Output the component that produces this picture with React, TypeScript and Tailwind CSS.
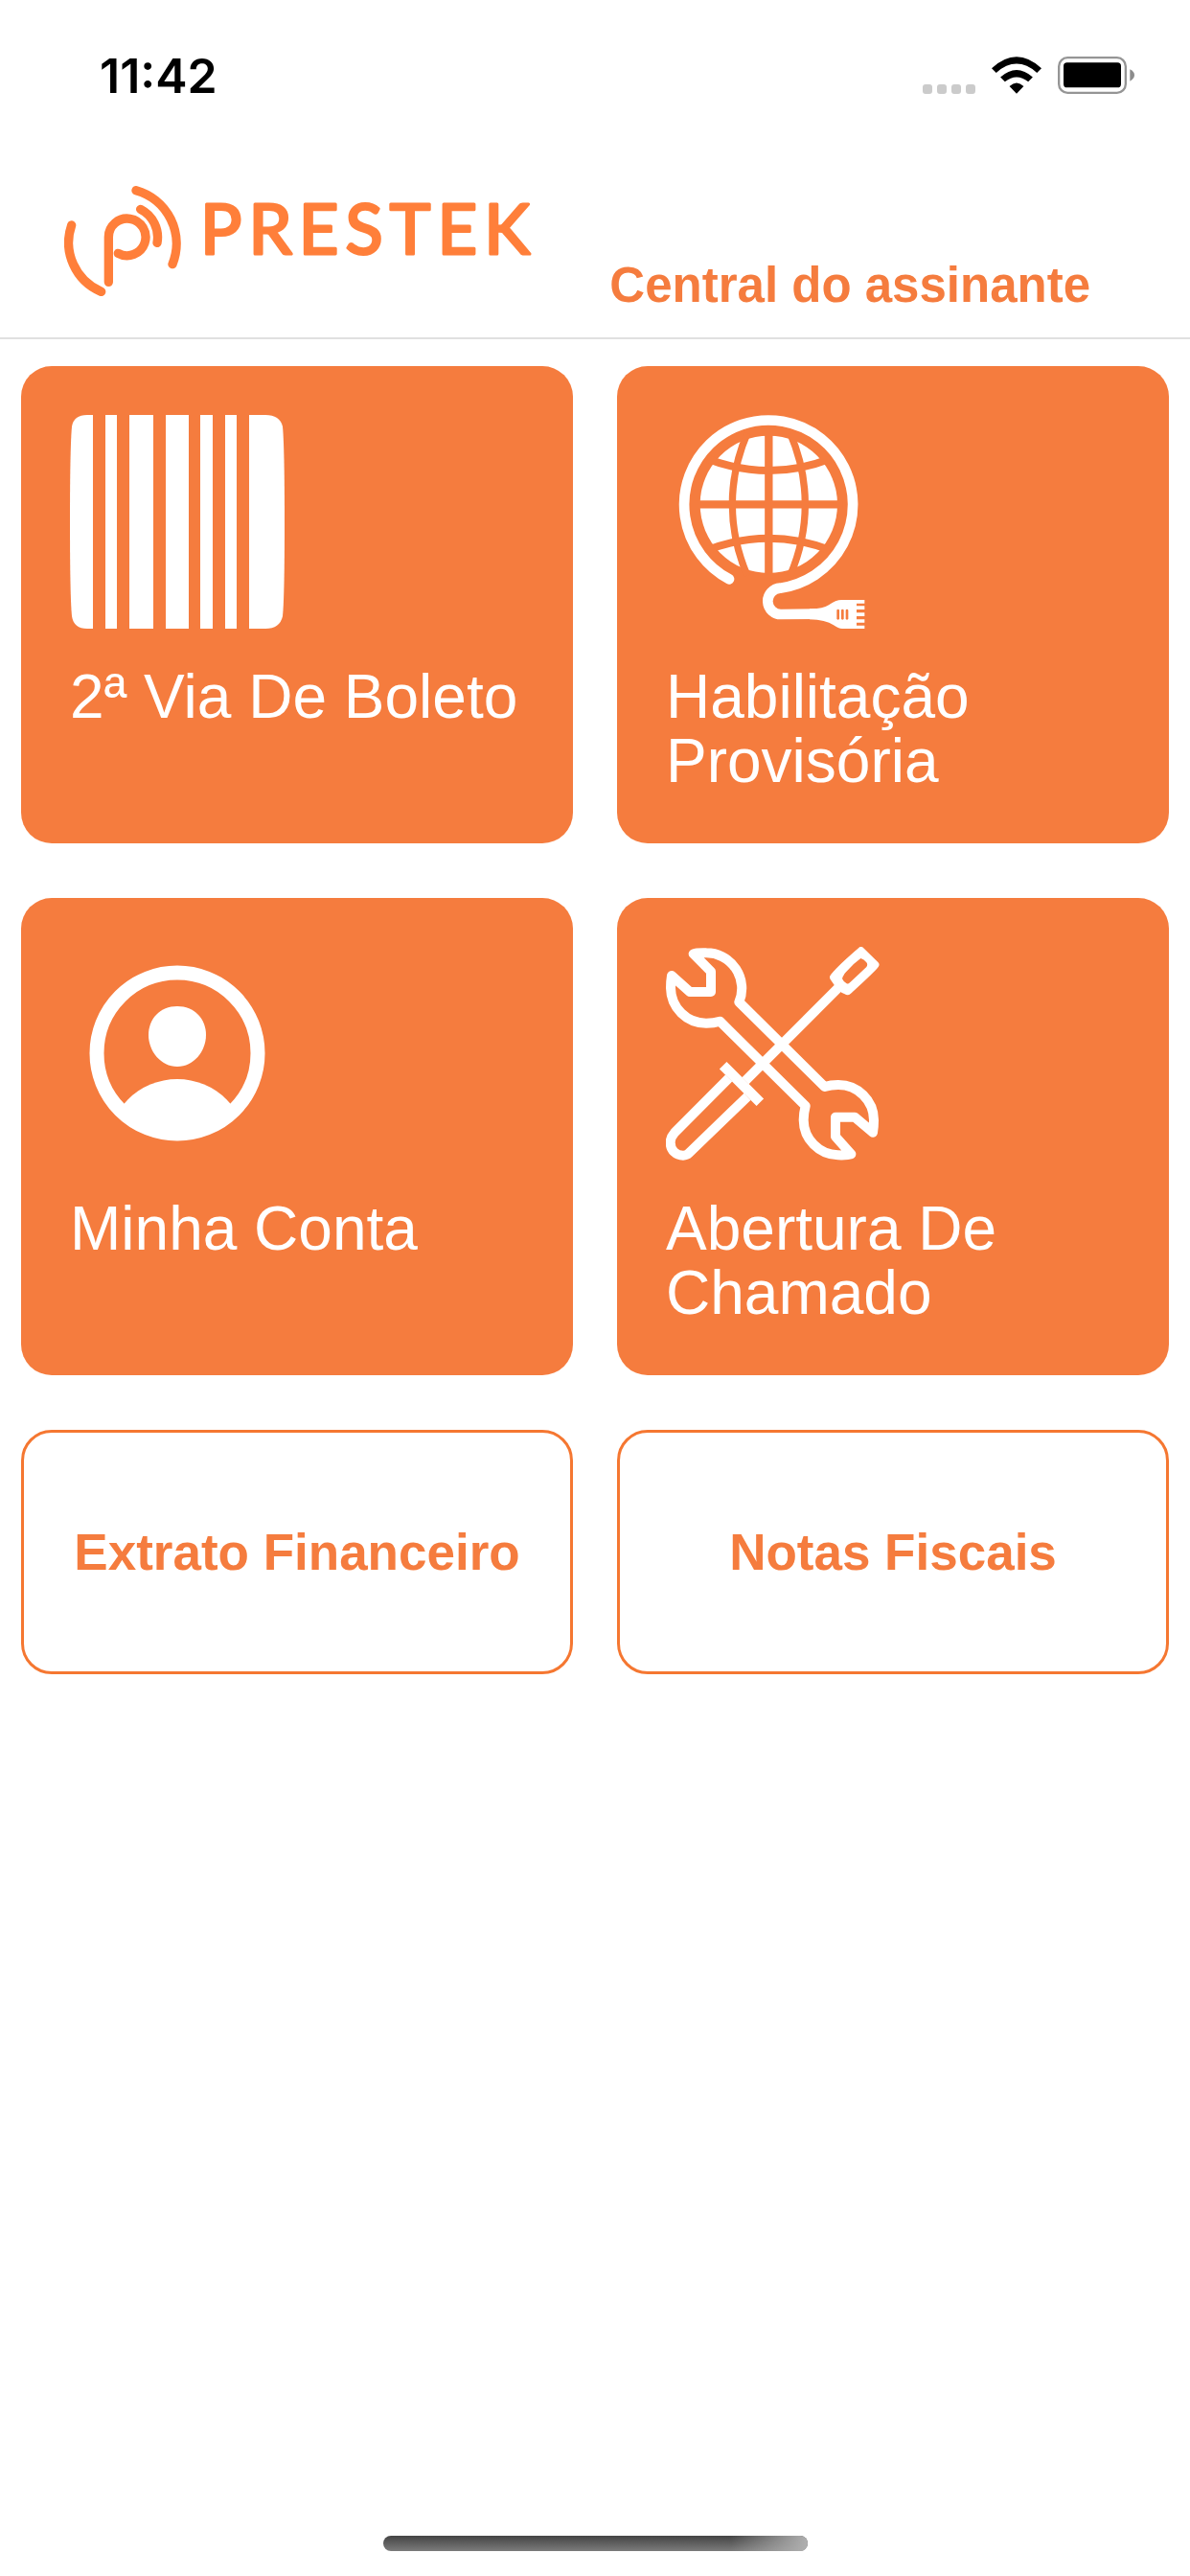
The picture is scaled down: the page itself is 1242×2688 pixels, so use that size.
import type { ReactNode } from "react";

function StatusBar() {
  return (
    <div className="flex items-end justify-between pt-[50px] pr-[58px] pl-[104px]">
      <time className="font-[Inter,sans-serif] text-[50px] leading-[58px] font-semibold text-black">11:42</time>
      <div className="flex items-end gap-[17px] pb-[10px]">
        <div className="flex gap-[5px]" aria-label="Sem sinal">
          {[0, 1, 2, 3].map((n) => (
            <span key={n} className="size-[10px] rounded-[3px] bg-[#cbcbcb]" />
          ))}
        </div>
        <svg className="w-[52px]" viewBox="284 55 154 116" aria-label="Wi-Fi">
          <path d="M284 91 Q361 20 438 91 L424 105 Q361 50 298 105 Z" />
          <path d="M311 119 Q361 74 411 119 L397 133 Q361 104 325 133 Z" />
          <path d="M339 147 Q361 126 383 147 L361 170 Z" />
        </svg>
        <svg className="w-[80px]" viewBox="492 57 240 117" aria-label="Bateria cheia">
          <rect x="495.500" y="60.500" width="209" height="110" rx="27" fill="none" stroke="#959595" strokeWidth="7" />
          <rect x="510" y="76" width="180" height="78" rx="11" />
          <path d="M718 97 Q732 104 732 115 Q732 127 718 134 Z" fill="#8c8c8c" />
        </svg>
      </div>
    </div>
  );
}

function Logo() {
  return (
    <div className="flex items-start text-[#ff7f3a]">
      <svg className="w-[122px]" viewBox="51 42 366 346" fill="none" stroke="currentColor" strokeWidth="28" strokeLinecap="round" aria-hidden="true">
        <path d="M74 165 A167 167 0 0 0 167 373" />
        <path d="M276 56 A173 173 0 0 1 390 287" />
        <path d="M190 343 V203 A58 58 0 1 1 220 253" />
        <path d="M290 115 A98 98 0 0 1 342 220" />
      </svg>
      <svg className="w-[370px]" viewBox="0 0 370 115" aria-label="PRESTEK">
        <text
          x="20"
          y="71"
          fill="currentColor"
          stroke="currentColor"
          strokeWidth="3"
          strokeLinejoin="round"
          className="font-[Lato,sans-serif] text-[72px] font-normal tracking-widest"
        >
          PRESTEK
        </text>
      </svg>
    </div>
  );
}

function BarcodeIcon() {
  return (
    <svg className="size-[224px]" viewBox="0 0 224 224" fill="currentColor" aria-hidden="true">
      <path d="M24 0 H18 Q4 0 2 12 Q0 34 0 112 Q0 190 2 210 Q4 223 18 223 H24 Z" />
      <rect x="37" width="12" height="223" />
      <rect x="62" width="25" height="223" />
      <rect x="100" width="24" height="223" />
      <rect x="136" width="13" height="223" />
      <rect x="162" width="12" height="223" />
      <path d="M187 0 H204 Q219 0 222 12 Q224 34 224 112 Q224 190 222 210 Q219 223 204 223 H187 Z" />
    </svg>
  );
}

function GlobeCableIcon() {
  return (
    <svg className="size-[224px]" viewBox="30 39 672 672" fill="currentColor" aria-hidden="true">
      <circle cx="352" cy="319" r="215" />
      <g fill="none" stroke="#f57c3e" strokeWidth="24">
        <path d="M352 90 V550 M120 319 H584" strokeWidth="25" />
        <path d="M285 96 Q238 205 238 319 Q238 433 285 542" strokeWidth="22" />
        <path d="M419 96 Q466 205 466 319 Q466 433 419 542" strokeWidth="22" />
        <path d="M160 176 Q255 213 352 213 Q449 213 544 176" />
        <path d="M160 462 Q255 425 352 425 Q449 425 544 462" />
      </g>
      <path
        d="M228 553 A264 264 0 1 1 388 581 A41 41 0 0 0 392 663 L500 662"
        fill="none"
        stroke="currentColor"
        strokeWidth="32"
        strokeLinecap="round"
      />
      <path d="M480 646 Q520 647 540 634 Q562 618 580 618 H652 V629 H627 V637 H652 V648 H627 V658 H652 V669 H627 V679 H652 V689 H627 V698 H652 V708 H582 Q570 708 555 697 Q530 680 480 679 Z" />
      <g fill="#f57c3e">
        <rect x="565" y="647" width="8" height="33" rx="4" />
        <rect x="579" y="647" width="8" height="33" rx="4" />
        <rect x="593" y="647" width="8" height="33" rx="4" />
      </g>
    </svg>
  );
}

function AccountIcon() {
  return (
    <svg className="size-[224px]" viewBox="0 0 224 224" fill="currentColor" aria-hidden="true">
      <clipPath id="account-disc">
        <circle cx="112" cy="111" r="84" />
      </clipPath>
      <circle cx="112" cy="111" r="84" fill="none" stroke="currentColor" strokeWidth="15" />
      <path d="M112 62 C130 62 142 75 142 92 C142 109 129 125 112 125 C95 125 82 109 82 92 C82 75 94 62 112 62 Z" />
      <circle cx="112" cy="211" r="73" clipPath="url(#account-disc)" />
    </svg>
  );
}

function ToolsIcon() {
  return (
    <svg className="size-[224px]" viewBox="28 38 672 672" fill="none" stroke="currentColor" strokeWidth="30" aria-hidden="true">
      <path
        strokeLinejoin="round"
        d="M257 211 A111 111 0 0 0 155 57 Q125 56 114 60 L169 115 V179 H103 L46 128 Q43 145 43 167 A111 111 0 0 0 155 277 Q178 277 197 271 L465 536 Q459 560 459 580 A111 111 0 0 0 567 690 Q597 691 608 687 L559 632 V571 H619 L676 619 Q679 602 679 580 A111 111 0 0 0 567 470 Q544 470 525 476 Z"
      />
      <path d="M277 457 L570 164" />
      <path d="M207 409 L323 525" strokeWidth="32" />
      <path d="M225 449 L55 620 Q42 635 42 650 C42 675 60 691 82 691 Q93 691 100 684 L283 507" />
      <path
        fill="currentColor"
        stroke="none"
        fillRule="evenodd"
        d="M632 41 Q639 33 646 41 L692 86 Q699 93 693 101 Q682 116 607 184 Q598 192 588 186 L578 181 L556 159 L543 140 Q538 132 545 124 Q570 94 632 41 Z M638 74 Q615 90 592 117 Q582 128 580 138 Q583 146 593 152 Q598 156 604 150 L656 101 Q661 93 656 87 Q648 76 638 74 Z"
      />
    </svg>
  );
}

function Tile({ icon, label }: { icon: ReactNode; label: string }) {
  return (
    <button
      type="button"
      className="flex min-h-[498px] flex-col items-start gap-[37px] rounded-[32px] bg-[#f57c3e] p-[51px] pr-[40px] pb-[48px] text-left text-[64px] leading-[67px] text-white"
    >
      {icon}
      <span>{label}</span>
    </button>
  );
}

function OutlineButton({ label }: { label: string }) {
  return (
    <button
      type="button"
      className="min-h-[255px] rounded-[32px] border-3 border-[#f57731] bg-white text-[53px] leading-[60px] font-bold text-[#f57c3e]"
    >
      {label}
    </button>
  );
}

export default function App() {
  return (
    <div className="flex min-h-screen flex-col bg-white font-['Liberation_Sans',Arial,sans-serif]">
      <StatusBar />
      <header className="flex items-start justify-between border-b-2 border-[#e0e0e0] pt-[86px] pr-[104px] pb-[24px] pl-[67px]">
        <Logo />
        <h1 className="pt-[74px] text-[51px] leading-[60px] font-bold text-[#f57c3e]">Central do assinante</h1>
      </header>
      <main className="grid grid-cols-2 gap-x-[46px] gap-y-[57px] px-[22px] pt-[28px]">
        <Tile icon={<BarcodeIcon />} label="2ª Via De Boleto" />
        <Tile icon={<GlobeCableIcon />} label="Habilitação Provisória" />
        <Tile icon={<AccountIcon />} label="Minha Conta" />
        <Tile icon={<ToolsIcon />} label="Abertura De Chamado" />
        <OutlineButton label="Extrato Financeiro" />
        <OutlineButton label="Notas Fiscais" />
      </main>
      <div className="mt-auto flex justify-center pb-[26px]">
        <div className="h-[16px] w-[443px] overflow-hidden rounded-full bg-linear-to-b from-[#444444] to-[#7c7c7c]">
          <div className="ml-auto h-full w-[80px] bg-linear-to-r from-transparent to-[#b0b0b0]" />
        </div>
      </div>
    </div>
  );
}
